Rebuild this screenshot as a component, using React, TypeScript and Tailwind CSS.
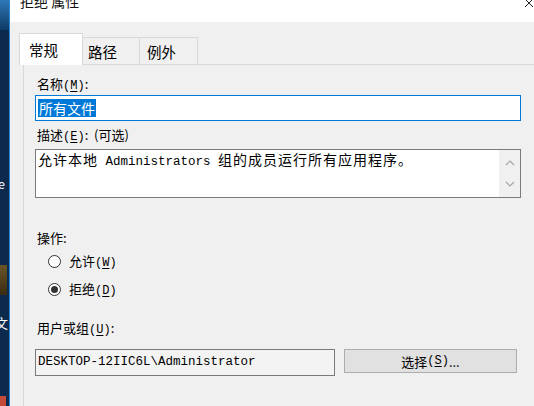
import React from 'react';

const cjk = { fontFamily: '"Noto Sans CJK SC", "Noto Sans", sans-serif' };
const mono = { fontFamily: '"Liberation Mono", "Noto Sans CJK SC", monospace' };

const Key: React.FC<{ k: string }> = ({ k }) => (
  <span className="text-[12px]" style={mono}>
    (<span className="underline underline-offset-2">{k}</span>)
  </span>
);

const Radio: React.FC<{ checked?: boolean; label: string; k: string }> = ({ checked, label, k }) => (
  <div className="flex items-center h-[28px] pl-[13px]">
    <span className="w-[13px] h-[13px] rounded-full border border-[#333] bg-white flex items-center justify-center">
      {checked && <span className="w-[7px] h-[7px] rounded-full bg-[#333]" />}
    </span>
    <span className="ml-[8px] text-[13px] leading-none">
      {label}
      <Key k={k} />
    </span>
  </div>
);

export default function App() {
  return (
    <div className="w-[534px] h-[406px] flex overflow-hidden text-black" style={cjk}>
      {/* desktop behind the dialog */}
      <div className="w-[9px] h-full flex flex-col bg-[#0b2a4d] overflow-hidden">
        <div className="h-[30px] bg-gradient-to-b from-[#2f79b8] to-[#0f3a66]" />
        <div className="h-[145px]" />
        <div className="h-[18px] text-white text-[13px] leading-[18px] -ml-[7px]">te</div>
        <div className="h-[72px]" />
        <div className="h-[30px] w-[7px] bg-gradient-to-b from-[#6b5428] to-[#3b2c12]" />
        <div className="h-[20px]" />
        <div className="h-[16px] text-white text-[13px] leading-[16px] -ml-[5px]">文</div>
        <div className="flex-1" />
        <div className="h-[10px] w-[6px] bg-[#c44a3a]" />
      </div>
      <div className="w-px h-full bg-[#2a87d8]" />

      {/* dialog */}
      <div className="flex-1 flex flex-col bg-[#f0f0f0]">
        <div className="h-[22px] bg-white flex items-start justify-between overflow-hidden">
          <span className="ml-[10px] -mt-[9px] text-[14px] leading-[20px] text-[#111]">拒绝 属性</span>
          <svg width="10" height="9" viewBox="0 0 10 9" className="-mt-[1px]">
            <path d="M1 0 L9 8 M9 0 L1 8" stroke="#222" strokeWidth="1" />
          </svg>
        </div>

        <div className="flex-1 flex flex-col pt-[11px] pl-[9px]">
          {/* tabs */}
          <div className="flex items-end h-[32px]">
            <div className="w-[64px] h-[32px] bg-white border border-b-0 border-[#d9d9d9] flex items-center pl-[9px] text-[14.5px] relative z-10">
              常规
            </div>
            <div className="w-[57px] h-[28px] bg-[#f0f0f0] border border-l-0 border-b-0 border-[#d9d9d9] flex items-center pl-[5px] text-[14.5px]">
              路径
            </div>
            <div className="w-[58px] h-[28px] bg-[#f0f0f0] border border-l-0 border-b-0 border-[#d9d9d9] flex items-center pl-[7px] text-[14.5px]">
              例外
            </div>
          </div>

          {/* panel */}
          <div className="flex-1 ml-[4px] border-t border-l border-[#d9d9d9] bg-[#f0f0f0] pl-[11px] pt-[10px] -mt-px">
            <div className="h-[18px] pl-[2px] text-[13px] leading-[18px]">
              名称<Key k="M" />:
            </div>
            <div className="mt-[2px] w-[486px] h-[26px] border border-[#0078d7] bg-white flex items-center pl-[2px]">
              <span className="bg-[#0078d7] text-white text-[14px] leading-[18px] px-px">所有文件</span>
            </div>

            <div className="mt-[5px] h-[18px] pl-[2px] text-[13px] leading-[18px] whitespace-pre">
              描述<Key k="E" />{':  (可选)'}
            </div>
            <div className="mt-[5px] w-[486px] h-[49px] border border-[#7a7a7a] bg-white flex">
              <div className="flex-1 pl-[2px] pt-0 text-[12.5px] leading-[18px] whitespace-nowrap" style={mono}>
                <span className="text-[14px] tracking-[1px]" style={cjk}>允许本地</span>
                {' Administrators '}
                <span className="text-[14px] tracking-[1px]" style={cjk}>组的成员运行所有应用程序。</span>
              </div>
              <div className="w-[21px] bg-[#f0f0f0] flex flex-col items-center justify-between py-[10px]">
                <svg width="10" height="6" viewBox="0 0 10 6">
                  <path d="M1 5 L5 1 L9 5" stroke="#a6a6a6" strokeWidth="1.2" fill="none" />
                </svg>
                <svg width="10" height="6" viewBox="0 0 10 6">
                  <path d="M1 1 L5 5 L9 1" stroke="#a6a6a6" strokeWidth="1.2" fill="none" />
                </svg>
              </div>
            </div>

            <div className="mt-[31px] h-[18px] pl-[2px] text-[13px] leading-[18px]">操作:</div>
            <div className="mt-0">
              <Radio label="允许" k="W" />
              <Radio checked label="拒绝" k="D" />
            </div>

            <div className="mt-[16px] h-[18px] pl-[2px] text-[13px] leading-[18px]">
              用户或组<Key k="U" />:
            </div>
            <div className="mt-[12px] flex items-start">
              <div className="w-[300px] h-[27px] border border-[#7a7a7a] bg-[#f3f3f3] flex items-center pl-[2px] text-[12.5px]" style={mono}>
                DESKTOP-12IIC6L\Administrator
              </div>
              <button className="ml-[9px] w-[173px] h-[24px] border border-[#adadad] bg-[#e1e1e1] text-[13px] leading-none flex items-center justify-center">
                选择<Key k="S" />...
              </button>
            </div>
          </div>
        </div>
      </div>
    </div>
  );
}
